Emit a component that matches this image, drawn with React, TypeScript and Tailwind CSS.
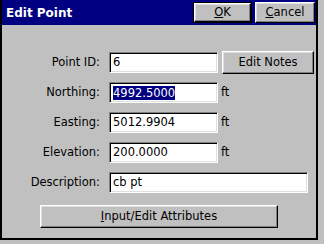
const face = ' font-["DejaVu_Sans",sans-serif] text-[11.5px] text-black '
const raised =
  ' bg-[#c0c0c0] border border-t-white border-l-white border-r-black border-b-black shadow-[inset_-1px_-1px_0_#808080,inset_1px_1px_0_#dfdfdf] flex items-center justify-center '
const sunken =
  ' bg-white h-[21px] border border-t-[#808080] border-l-[#808080] border-r-white border-b-white shadow-[inset_1px_1px_0_#000,inset_-1px_-1px_0_#dfdfdf] flex items-center pl-[3px] '

function Row({ label, children }: { label: string; children: React.ReactNode }) {
  return (
    <div className="flex items-center h-[21px]">
      <div className={'w-[99px] text-right pr-[1px]' + face}>{label}</div>
      <div className="ml-[8px] flex items-center">{children}</div>
    </div>
  )
}

export default function App() {
  return (
    <div className="w-[324px] h-[244px] bg-[#c0c0c0] overflow-hidden">
      <div className="w-[318px] h-[240px] border-l-2 border-r-2 border-b-2 border-l-black border-r-black border-b-black bg-[#c0c0c0] flex flex-col">
        <div className="h-[25px] bg-[#000080] flex items-center pl-[4px] pr-[1px]">
          <div className='flex-1 text-white font-bold text-[12px] font-["DejaVu_Sans",sans-serif]'>Edit Point</div>
          <div className="border border-black">
            <div className={'w-[57px] h-[19px]' + raised + face}>
              <span><span className="underline">O</span>K</span>
            </div>
          </div>
          <div className={'ml-[3px] w-[60px] h-[21px]' + raised + face}>
            <span><span className="underline">C</span>ancel</span>
          </div>
        </div>

        <div className="flex flex-col gap-[9px] pt-[27px]">
          <Row label="Point ID:">
            <div className={'w-[109px]' + sunken + face}>6</div>
            <div className={'ml-[4px] -my-[1px] w-[92px] h-[23px]' + raised + face}>Edit Notes</div>
          </Row>
          <Row label="Northing:">
            <div className={'w-[109px]' + sunken + face}>
              <span className="bg-[#000080] text-white leading-[14px]">4992.5000</span>
            </div>
            <span className={'ml-[3px]' + face}>ft</span>
          </Row>
          <Row label="Easting:">
            <div className={'w-[109px]' + sunken + face}>5012.9904</div>
            <span className={'ml-[3px]' + face}>ft</span>
          </Row>
          <Row label="Elevation:">
            <div className={'w-[109px]' + sunken + face}>200.0000</div>
            <span className={'ml-[3px]' + face}>ft</span>
          </Row>
          <Row label="Description:">
            <div className={'w-[199px]' + sunken + face}>cb pt</div>
          </Row>
        </div>

        <div className={'mt-[12px] ml-[38px] w-[238px] h-[23px]' + raised + face}>
          <span><span className="underline">I</span>nput/Edit Attributes</span>
        </div>
      </div>
    </div>
  )
}
